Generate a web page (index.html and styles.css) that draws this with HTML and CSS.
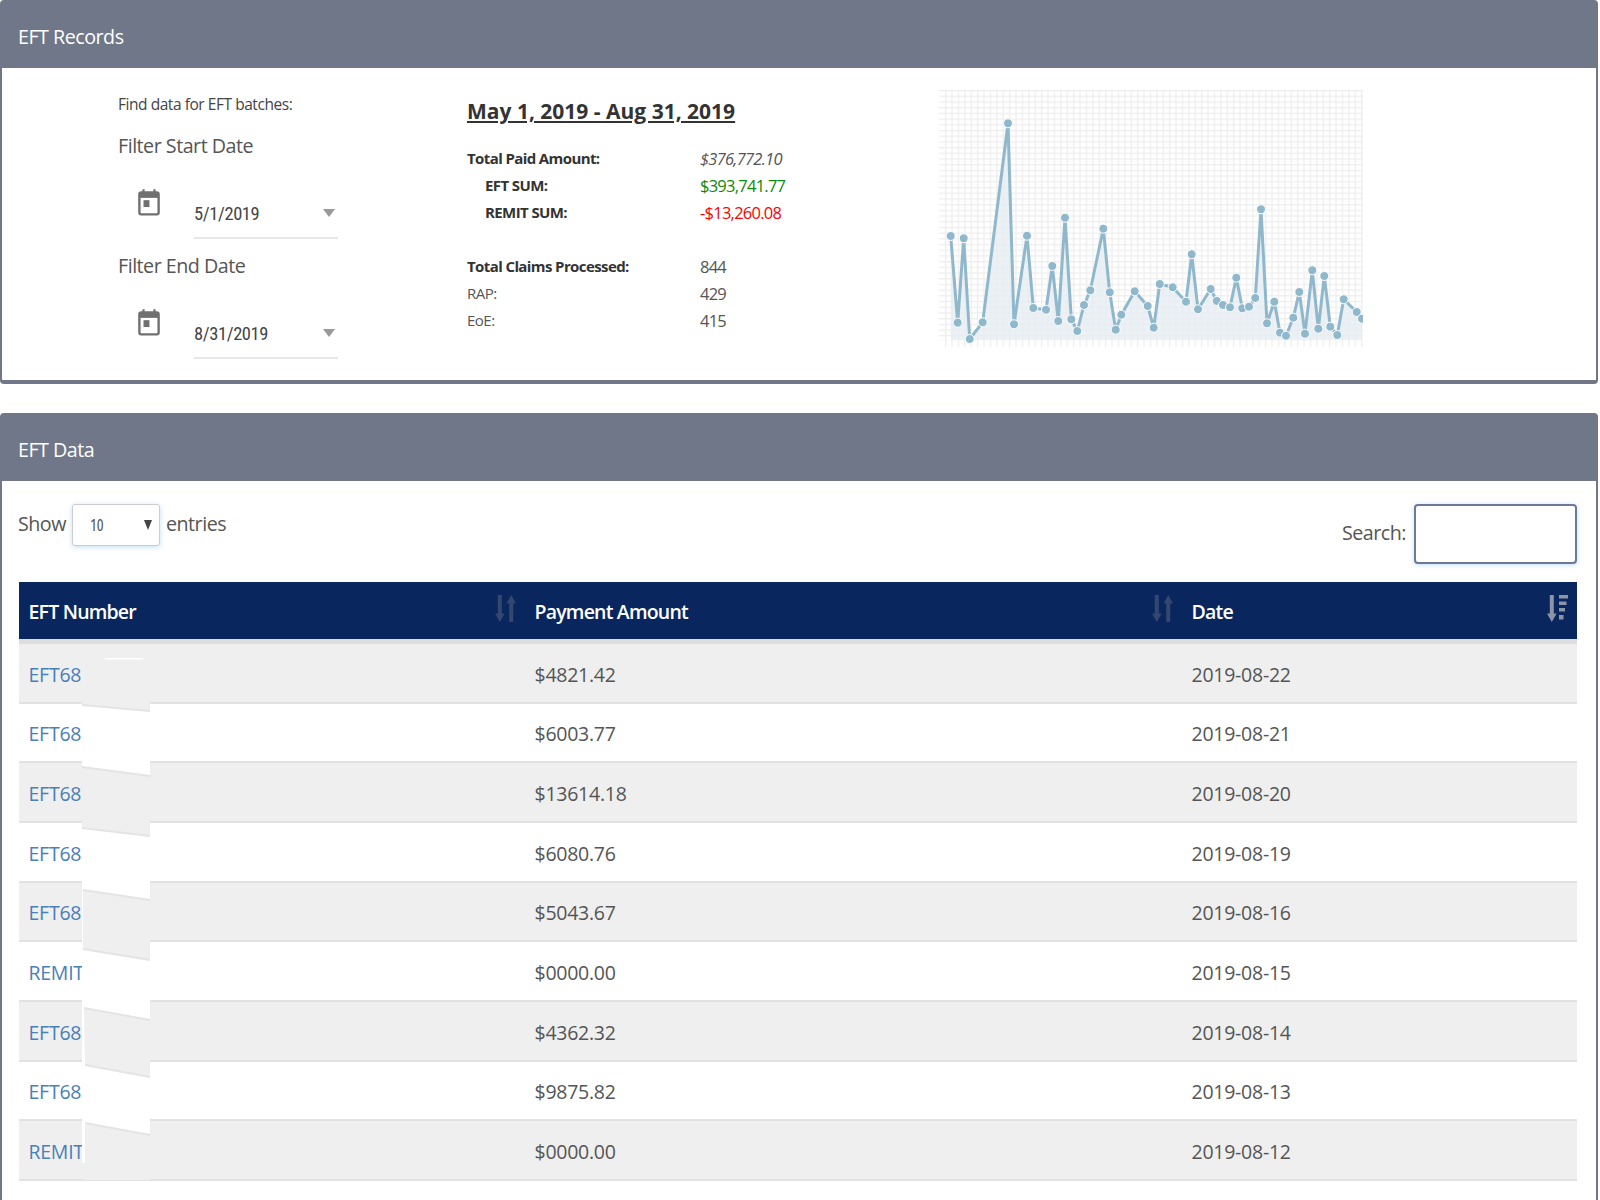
FILE: index.html
```html
<!DOCTYPE html>
<html lang="en">
<head>
<meta charset="utf-8">
<title>EFT Records</title>
<link rel="stylesheet" href="styles.css">
</head>
<body>
<svg class="defs" width="0" height="0" aria-hidden="true">
  <symbol id="cal" viewBox="0 0 24 30">
    <path d="M6 1v6M18 1v6" fill="none" stroke="#707070" stroke-width="2.4"/>
    <rect x="1.5" y="4.5" width="21" height="24" rx="2" fill="none" stroke="#707070" stroke-width="2.6"/>
    <rect x="1.5" y="4.5" width="21" height="6" fill="#707070"/>
    <rect x="6" y="13" width="6.5" height="7.5" fill="#707070"/>
  </symbol>
  <symbol id="sort" viewBox="0 0 21 27">
    <path d="M2.800 0h4v18.500h2.800L4.800 27 0 18.500h2.800zM14.200 27h4V8.500H21L16.200 0l-4.800 8.500h2.800z"/>
  </symbol>
  <symbol id="sort-desc" viewBox="0 0 21 27">
    <path d="M2.800 0h4v18.500h2.800L4.800 27 0 18.500h2.800z"/>
    <path d="M12 0h9v3.500h-9zM12 6.500h7.500V10H12zM12 13h6v3.500h-6zM12 20h4.500v4.500H12z"/>
  </symbol>
</svg>

<section class="panel panel-records">
  <header class="panel-head">EFT Records</header>
  <div class="records-body">
    <div class="filters">
      <p class="find">Find data for EFT batches:</p>
      <div class="filter-label">Filter Start Date</div>
      <div class="date-field">
        <svg class="cal-icon"><use href="#cal"/></svg>
        <div class="date-input"><span>5/1/2019</span><i class="caret"></i></div>
      </div>
      <div class="filter-label">Filter End Date</div>
      <div class="date-field">
        <svg class="cal-icon"><use href="#cal"/></svg>
        <div class="date-input"><span>8/31/2019</span><i class="caret"></i></div>
      </div>
    </div>

    <div class="summary">
      <h2 class="range">May 1, 2019 - Aug 31, 2019</h2>
      <div class="stat"><b>Total Paid Amount:</b><em>$376,772.10</em></div>
      <div class="stat indent"><b>EFT SUM:</b><span class="pos">$393,741.77</span></div>
      <div class="stat indent"><b>REMIT SUM:</b><span class="neg">-$13,260.08</span></div>
      <div class="stat gap"><b>Total Claims Processed:</b><span>844</span></div>
      <div class="stat"><span>RAP:</span><span>429</span></div>
      <div class="stat"><span>EoE:</span><span>415</span></div>
    </div>

    <svg class="chart" viewBox="938 88 425 262" width="425" height="262">
      <defs>
        <pattern id="gv" x="945" y="0" width="6.4" height="10" patternUnits="userSpaceOnUse">
          <rect width="1.300" height="10" fill="#eeeeee"/>
        </pattern>
        <pattern id="gh" x="0" y="90" width="10" height="5.700" patternUnits="userSpaceOnUse">
          <rect width="10" height="1.300" fill="#eeeeee"/>
        </pattern>
      </defs>
      <rect x="945" y="90" width="418" height="257" fill="url(#gv)"/>
      <rect x="939" y="90" width="424" height="251" fill="url(#gh)"/>
      <polygon class="area" points="950.7,340 950.7,236 957.7,322.7 963.7,238.3 969.7,339 982.7,322.3 1008,123.3 1014,324.3 1027,235.7 1033.300,308 1046,309.700 1052.300,266 1058.300,321 1065,217.700 1071.300,319.300 1077.300,331 1084,305 1090.300,290.300 1103.300,228.700 1109.700,292.300 1115.700,329.700 1121.300,314.700 1134.700,291.300 1147.700,306 1153.700,327.700 1159.700,284 1172.700,287.300 1186,301.700 1191.700,254.300 1198,309.300 1210.700,289 1216.700,301 1223,305 1230,307.300 1236.300,277.700 1242.300,308.300 1249,306.700 1255.300,298 1261,209.300 1267,323.300 1274.300,301.700 1280,332.700 1286,335.700 1293.300,317.700 1299.300,292 1305,333.700 1312.300,270.300 1318.300,328.700 1324.300,276 1330.300,326.700 1337.300,335 1343.700,299.300 1356.700,312 1362,318.700 1362,340"/>
      <polyline class="line" points="950.7,236 957.7,322.7 963.7,238.3 969.7,339 982.7,322.3 1008,123.3 1014,324.3 1027,235.7 1033.300,308 1046,309.700 1052.300,266 1058.300,321 1065,217.700 1071.300,319.300 1077.300,331 1084,305 1090.300,290.300 1103.300,228.700 1109.700,292.300 1115.700,329.700 1121.300,314.700 1134.700,291.300 1147.700,306 1153.700,327.700 1159.700,284 1172.700,287.300 1186,301.700 1191.700,254.300 1198,309.300 1210.700,289 1216.700,301 1223,305 1230,307.300 1236.300,277.700 1242.300,308.300 1249,306.700 1255.300,298 1261,209.300 1267,323.300 1274.300,301.700 1280,332.700 1286,335.700 1293.300,317.700 1299.300,292 1305,333.700 1312.300,270.300 1318.300,328.700 1324.300,276 1330.300,326.700 1337.300,335 1343.700,299.300 1356.700,312 1362,318.700"/>
      <g class="dots">
        <circle cx="950.7" cy="236" r="4.500"/><circle cx="957.7" cy="322.7" r="4.500"/><circle cx="963.7" cy="238.3" r="4.500"/><circle cx="969.7" cy="339" r="4.500"/><circle cx="982.7" cy="322.3" r="4.500"/><circle cx="1008" cy="123.3" r="4.500"/><circle cx="1014" cy="324.3" r="4.500"/><circle cx="1027" cy="235.7" r="4.500"/><circle cx="1033.3" cy="308" r="4.500"/><circle cx="1046" cy="309.7" r="4.500"/><circle cx="1052.3" cy="266" r="4.500"/><circle cx="1058.3" cy="321" r="4.500"/><circle cx="1065" cy="217.7" r="4.500"/><circle cx="1071.3" cy="319.3" r="4.500"/><circle cx="1077.3" cy="331" r="4.500"/><circle cx="1084" cy="305" r="4.500"/><circle cx="1090.3" cy="290.3" r="4.500"/><circle cx="1103.3" cy="228.7" r="4.500"/><circle cx="1109.7" cy="292.3" r="4.500"/><circle cx="1115.7" cy="329.7" r="4.500"/><circle cx="1121.3" cy="314.7" r="4.500"/><circle cx="1134.7" cy="291.3" r="4.500"/><circle cx="1147.7" cy="306" r="4.500"/><circle cx="1153.7" cy="327.7" r="4.500"/><circle cx="1159.7" cy="284" r="4.500"/><circle cx="1172.7" cy="287.3" r="4.500"/><circle cx="1186" cy="301.7" r="4.500"/><circle cx="1191.7" cy="254.3" r="4.500"/><circle cx="1198" cy="309.3" r="4.500"/><circle cx="1210.7" cy="289" r="4.500"/><circle cx="1216.7" cy="301" r="4.500"/><circle cx="1223" cy="305" r="4.500"/><circle cx="1230" cy="307.3" r="4.500"/><circle cx="1236.3" cy="277.7" r="4.500"/><circle cx="1242.3" cy="308.3" r="4.500"/><circle cx="1249" cy="306.7" r="4.500"/><circle cx="1255.3" cy="298" r="4.500"/><circle cx="1261" cy="209.3" r="4.500"/><circle cx="1267" cy="323.3" r="4.500"/><circle cx="1274.3" cy="301.7" r="4.500"/><circle cx="1280" cy="332.7" r="4.500"/><circle cx="1286" cy="335.7" r="4.500"/><circle cx="1293.3" cy="317.7" r="4.500"/><circle cx="1299.3" cy="292" r="4.500"/><circle cx="1305" cy="333.7" r="4.500"/><circle cx="1312.3" cy="270.3" r="4.500"/><circle cx="1318.3" cy="328.7" r="4.500"/><circle cx="1324.3" cy="276" r="4.500"/><circle cx="1330.3" cy="326.7" r="4.500"/><circle cx="1337.3" cy="335" r="4.500"/><circle cx="1343.7" cy="299.3" r="4.500"/><circle cx="1356.7" cy="312" r="4.500"/><circle cx="1362" cy="318.7" r="4.500"/>
      </g>
    </svg>
  </div>
</section>

<section class="panel panel-data">
  <header class="panel-head">EFT Data</header>
  <div class="data-body">
    <div class="controls">
      <label class="length">Show
        <span class="select-wrap"><select class="length-select"><option>10</option></select></span>
        entries</label>
      <label class="search">Search: <input class="search-input" type="search"></label>
    </div>
    <div class="table-wrap">
      <table class="eft-table">
        <colgroup><col class="c1"><col class="c2"><col class="c3"></colgroup>
        <thead>
          <tr>
            <th><div class="th-in"><span class="th-label">EFT Number</span><svg class="sort-icon"><use href="#sort"/></svg></div></th>
            <th><div class="th-in"><span class="th-label">Payment Amount</span><svg class="sort-icon"><use href="#sort"/></svg></div></th>
            <th><div class="th-in"><span class="th-label">Date</span><svg class="sort-icon active"><use href="#sort-desc"/></svg></div></th>
          </tr>
        </thead>
        <tbody>
          <tr><td><a href="#">EFT68</a></td><td>$4821.42</td><td>2019-08-22</td></tr>
          <tr><td><a href="#">EFT68</a></td><td>$6003.77</td><td>2019-08-21</td></tr>
          <tr><td><a href="#">EFT68</a></td><td>$13614.18</td><td>2019-08-20</td></tr>
          <tr><td><a href="#">EFT68</a></td><td>$6080.76</td><td>2019-08-19</td></tr>
          <tr><td><a href="#">EFT68</a></td><td>$5043.67</td><td>2019-08-16</td></tr>
          <tr><td><a href="#">REMIT</a></td><td>$0000.00</td><td>2019-08-15</td></tr>
          <tr><td><a href="#">EFT68</a></td><td>$4362.32</td><td>2019-08-14</td></tr>
          <tr><td><a href="#">EFT68</a></td><td>$9875.82</td><td>2019-08-13</td></tr>
          <tr><td><a href="#">REMIT</a></td><td>$0000.00</td><td>2019-08-12</td></tr>
        </tbody>
      </table>
      <svg class="redact" viewBox="70 640 90 550" width="90" height="550" aria-hidden="true">
        <rect class="w" x="105" y="658" width="38" height="1.500"/>
        <rect class="w" x="82" y="702" width="68" height="440"/>
        <rect class="w" x="82" y="1120" width="4" height="43"/>
        <polygon class="g" points="82,700 150,700 150,711 82,705"/>
        <polygon class="g" points="82,767 150,776 150,836 82,828"/>
        <polygon class="g" points="83,890 150,900 150,960 83,949"/>
        <polygon class="g" points="84,1008 150,1020 150,1077 85,1065"/>
        <polygon class="g" points="85,1123 150,1135 150,1180 85,1180"/>
        <path class="s" d="M82 705L150 711M82 767L150 776M82 828L150 836M83 890L150 900M83 949L150 960M84 1008L150 1020M85 1065L150 1077M85 1123L150 1135"/>
      </svg>
    </div>
  </div>
</section>
</body>
</html>
```
FILE: styles.css
```css
* { box-sizing: border-box; }
html, body { margin: 0; background: #fff; }
body {
  width: 1600px;
  height: 1200px;
  overflow: hidden;
  font-family: "Open Sans", "Noto Sans", sans-serif;
  color: #555;
}
.defs { position: absolute; }

.panel {
  width: 1598px;
  border: 2px solid #6f7789;
  border-radius: 4px;
  background: #fff;
}
.panel-records { height: 384px; border-bottom-width: 4px; }
.panel-data { margin-top: 29px; height: 800px; }
.panel-head {
  height: 66px;
  padding-left: 16px;
  background: #6f7789;
  color: #fff;
  font-size: 19.700px;
  letter-spacing: -.5px;
  line-height: 70px;
}

/* records panel */
.records-body {
  display: grid;
  grid-template-columns: 349px 471px 428px;
  padding: 25px 0 0 116px;
}
.find {
  margin: 0 0 14px;
  height: 24px;
  font-size: 15.500px;
  letter-spacing: -.45px;
  line-height: 22px;
  color: #444;
}
.filter-label {
  height: 30px;
  font-size: 19.700px;
  letter-spacing: -.5px;
  line-height: 30px;
  color: #555;
}
.date-field {
  display: flex;
  align-items: flex-start;
  height: 78px;
  margin-bottom: 12px;
  padding-left: 20px;
}
.cal-icon {
  width: 22px;
  height: 30px;
  margin: 26px 34px 0 0;
}
.date-input {
  display: flex;
  align-items: center;
  justify-content: space-between;
  width: 144px;
  height: 78px;
  padding: 44px 3px 14px 0;
  border-bottom: 2px solid #e8e8e8;
  font-family: Roboto, "Open Sans", sans-serif;
  font-stretch: 75%;
  font-size: 18.500px;
  letter-spacing: -.4px;
  color: #444;
}
.caret {
  width: 0;
  height: 0;
  margin-top: -2px;
  border-left: 6px solid transparent;
  border-right: 6px solid transparent;
  border-top: 8px solid #999;
}
.range {
  margin: 0 0 16px;
  height: 36px;
  font-size: 21px;
  letter-spacing: 0;
  line-height: 36px;
  font-weight: 700;
  color: #333;
  text-decoration: underline;
}
.stat {
  display: grid;
  grid-template-columns: 233px auto;
  height: 27.100px;
  font-size: 16.500px;
  letter-spacing: -.75px;
  line-height: 27.100px;
  color: #555;
}
.stat b { font-size: 15px; letter-spacing: -.6px; font-weight: 700; color: #333; }
.stat span:first-child { font-size: 15px; letter-spacing: -.5px; }
.stat em { font-style: italic; }
.indent b { padding-left: 18px; }
.pos { color: #0a8a0a; }
.neg { color: #f00; }
.gap { margin-top: 27px; }
.chart { margin-top: -5px; display: block; }
.area { fill: #e4ecf0; opacity: .75; }
.line { fill: none; stroke: #90b8cc; stroke-width: 3; stroke-linejoin: round; }
.dots circle { fill: #90b8cc; stroke: #fff; stroke-width: 1; }

/* data panel */
.data-body { padding: 23px 19px 0 17px; }
.controls {
  display: flex;
  justify-content: space-between;
  align-items: flex-start;
  height: 60px;
  margin-left: -1px;
  font-size: 19.700px;
  letter-spacing: -.5px;
}
.length {
  display: flex;
  align-items: flex-start;
  gap: 6px;
  height: 42px;
  line-height: 40px;
}
.select-wrap { position: relative; display: block; }
.select-wrap::after {
  content: "";
  position: absolute;
  right: 8px;
  top: 16px;
  border-left: 4.500px solid transparent;
  border-right: 4.500px solid transparent;
  border-top: 10px solid #444;
}
.length-select {
  display: block;
  appearance: none;
  width: 88px;
  height: 42px;
  padding: 0 0 0 17px;
  border: 1px solid #ccc;
  border-radius: 3px;
  background: #fff;
  box-shadow: 0 1px 5px rgba(102, 175, 233, .4);
  font: 16px "Open Sans", sans-serif;
  font-stretch: 75%;
  color: #555;
}
.search {
  display: flex;
  align-items: flex-start;
  gap: 8px;
  height: 60px;
  line-height: 58px;
}
.search-input {
  width: 163px;
  height: 60px;
  border: 2px solid #6c7a98;
  border-radius: 4px;
  background: #fff;
  box-shadow: 0 1px 5px rgba(102, 175, 233, .4);
}
.table-wrap { position: relative; margin-top: 18px; }
.eft-table {
  width: 1558px;
  table-layout: fixed;
  border-collapse: separate;
  border-spacing: 0;
  font-size: 19.500px;
  letter-spacing: -.25px;
}
.c1 { width: 506px; }
.c2 { width: 657px; }
.c3 { width: 395px; }
.eft-table th {
  height: 62px;
  padding: 0 9px 5px 9.500px;
  border-bottom: 5px solid #ddd;
  background: #0a265e;
  background-clip: padding-box;
  color: #fff;
  font-weight: 600;
  letter-spacing: -.8px;
  text-align: left;
}
.th-in {
  display: flex;
  justify-content: space-between;
  align-items: center;
}
.th-label { padding-top: 7px; }
.sort-icon {
  width: 21px;
  height: 27px;
  fill: #33476f;
}
.sort-icon.active { fill: #8d94a6; }
.eft-table td {
  height: 59.670px;
  padding: 3px 9.500px 0;
  border-bottom: 2px solid #e2e2e2;
  vertical-align: middle;
}
.eft-table tbody tr:nth-child(odd) td { background: #efefef; }
.eft-table a { color: #4a80b8; text-decoration: none; }
.redact { position: absolute; left: 51px; top: 58px; }
.redact .w { fill: #fff; }
.redact .g { fill: #efefef; }
.redact .s { fill: none; stroke: #e4e4e4; stroke-width: 2; }
```
